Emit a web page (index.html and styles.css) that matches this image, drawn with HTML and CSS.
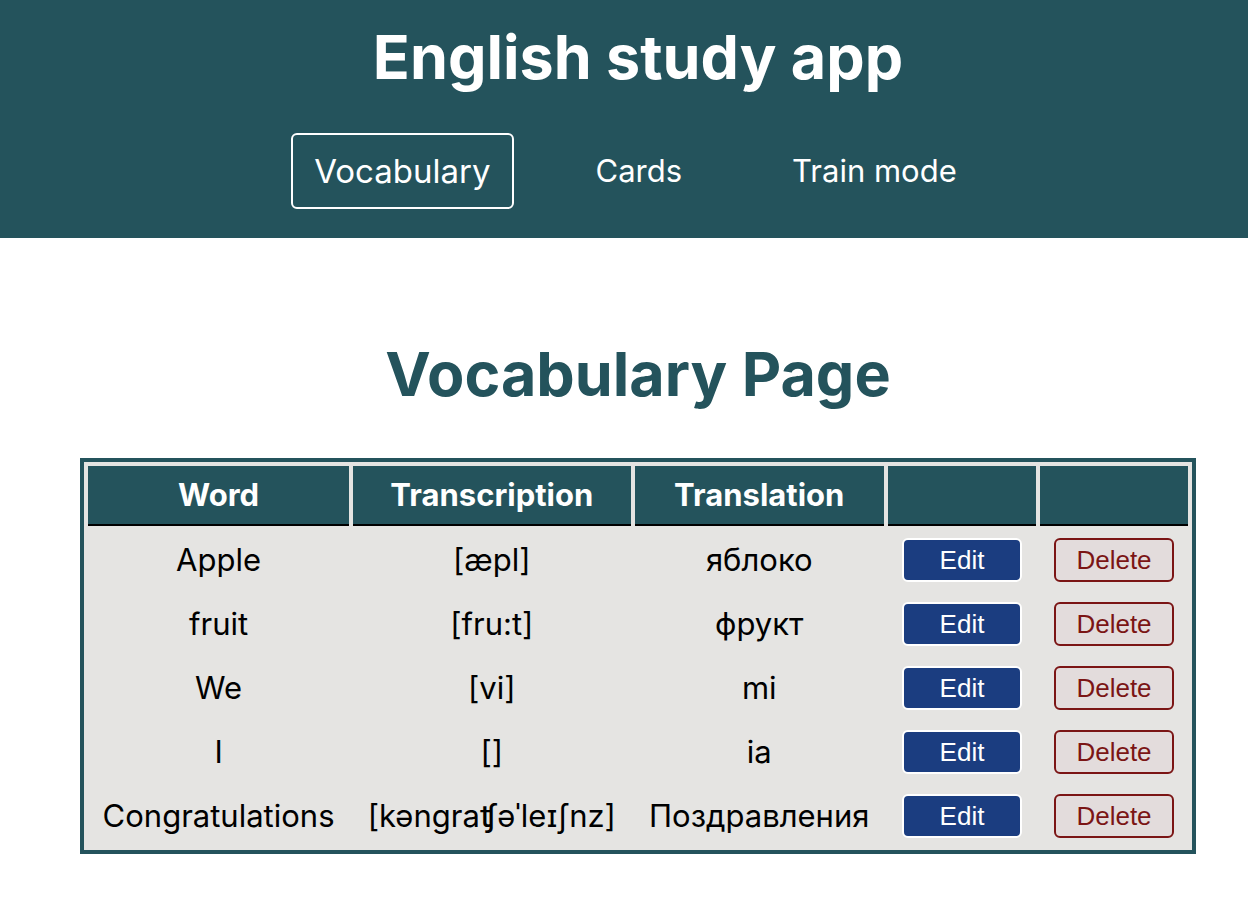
FILE: index.html
```html
<!DOCTYPE html>
<html lang="en">
<head>
<meta charset="utf-8">
<title>English study app</title>
<link rel="stylesheet" href="styles.css">
</head>
<body>
<header class="header">
  <h1 class="title">English study app</h1>
  <nav class="nav">
    <a class="nav-link active" href="#vocabulary">Vocabulary</a>
    <a class="nav-link" href="#cards">Cards</a>
    <a class="nav-link" href="#train">Train mode</a>
  </nav>
</header>
<main class="main">
  <h2 class="page-title">Vocabulary Page</h2>
  <table class="words">
    <thead>
      <tr><th>Word</th><th>Transcription</th><th>Translation</th><th class="action"></th><th class="action"></th></tr>
    </thead>
    <tbody>
      <tr><td>Apple</td><td>[æpl]</td><td>яблоко</td><td><button class="btn edit">Edit</button></td><td><button class="btn delete">Delete</button></td></tr>
      <tr><td>fruit</td><td>[fru:t]</td><td>фрукт</td><td><button class="btn edit">Edit</button></td><td><button class="btn delete">Delete</button></td></tr>
      <tr><td>We</td><td>[vi]</td><td>mi</td><td><button class="btn edit">Edit</button></td><td><button class="btn delete">Delete</button></td></tr>
      <tr><td>I</td><td>[]</td><td>ia</td><td><button class="btn edit">Edit</button></td><td><button class="btn delete">Delete</button></td></tr>
      <tr><td>Congratulations</td><td>[kəngraʧəˈleɪʃnz]</td><td>Поздравления</td><td><button class="btn edit">Edit</button></td><td><button class="btn delete">Delete</button></td></tr>
    </tbody>
  </table>
</main>
</body>
</html>
```
FILE: styles.css
```css
* { box-sizing: border-box; }
body {
  margin: 0;
  background: #fff;
  color: #000;
  font-family: Inter, "DejaVu Sans", sans-serif;
  font-size: 31px;
}
.header {
  padding: 19px 0 29px 28px;
  background: #24535c;
  color: #fff;
}
.title, .page-title {
  margin: 0;
  font-size: 61px;
  font-weight: 700;
  line-height: 76px;
  text-align: center;
}
.nav {
  display: flex;
  justify-content: center;
  align-items: center;
  gap: 54px;
  margin-top: 38px;
}
.nav-link {
  padding: 0 26px;
  border: 2px solid transparent;
  border-radius: 6px;
  color: inherit;
  line-height: 72px;
  text-decoration: none;
}
.nav-link.active {
  padding: 0 21px;
  border-color: #fff;
  font-size: 33px;
}
.main { padding: 98px 52px 58px 80px; }
.page-title { color: #24535c; }
.words {
  width: 100%;
  margin-top: 46px;
  border: 4px solid #24535c;
  border-collapse: separate;
  border-spacing: 4px 4px;
  background: #e5e4e2;
  line-height: 36px;
  text-align: center;
}
.words th {
  height: 60px;
  padding: 0 14px;
  border-bottom: 2px solid #000;
  background: #24535c;
  color: #fff;
  font-weight: 700;
}
.words th.action { width: 148px; }
.words td {
  height: 60px;
  padding: 0 14px;
}
.btn {
  display: block;
  width: 120px;
  height: 44px;
  padding: 0;
  border: 2px solid;
  border-radius: 6px;
  font: 26px "Liberation Sans", Arial, sans-serif;
}
.edit { border-color: #fff; background: #1b3d80; color: #fff; }
.delete { border-color: #7b1515; background: #e3dcdc; color: #7b1515; }
```
